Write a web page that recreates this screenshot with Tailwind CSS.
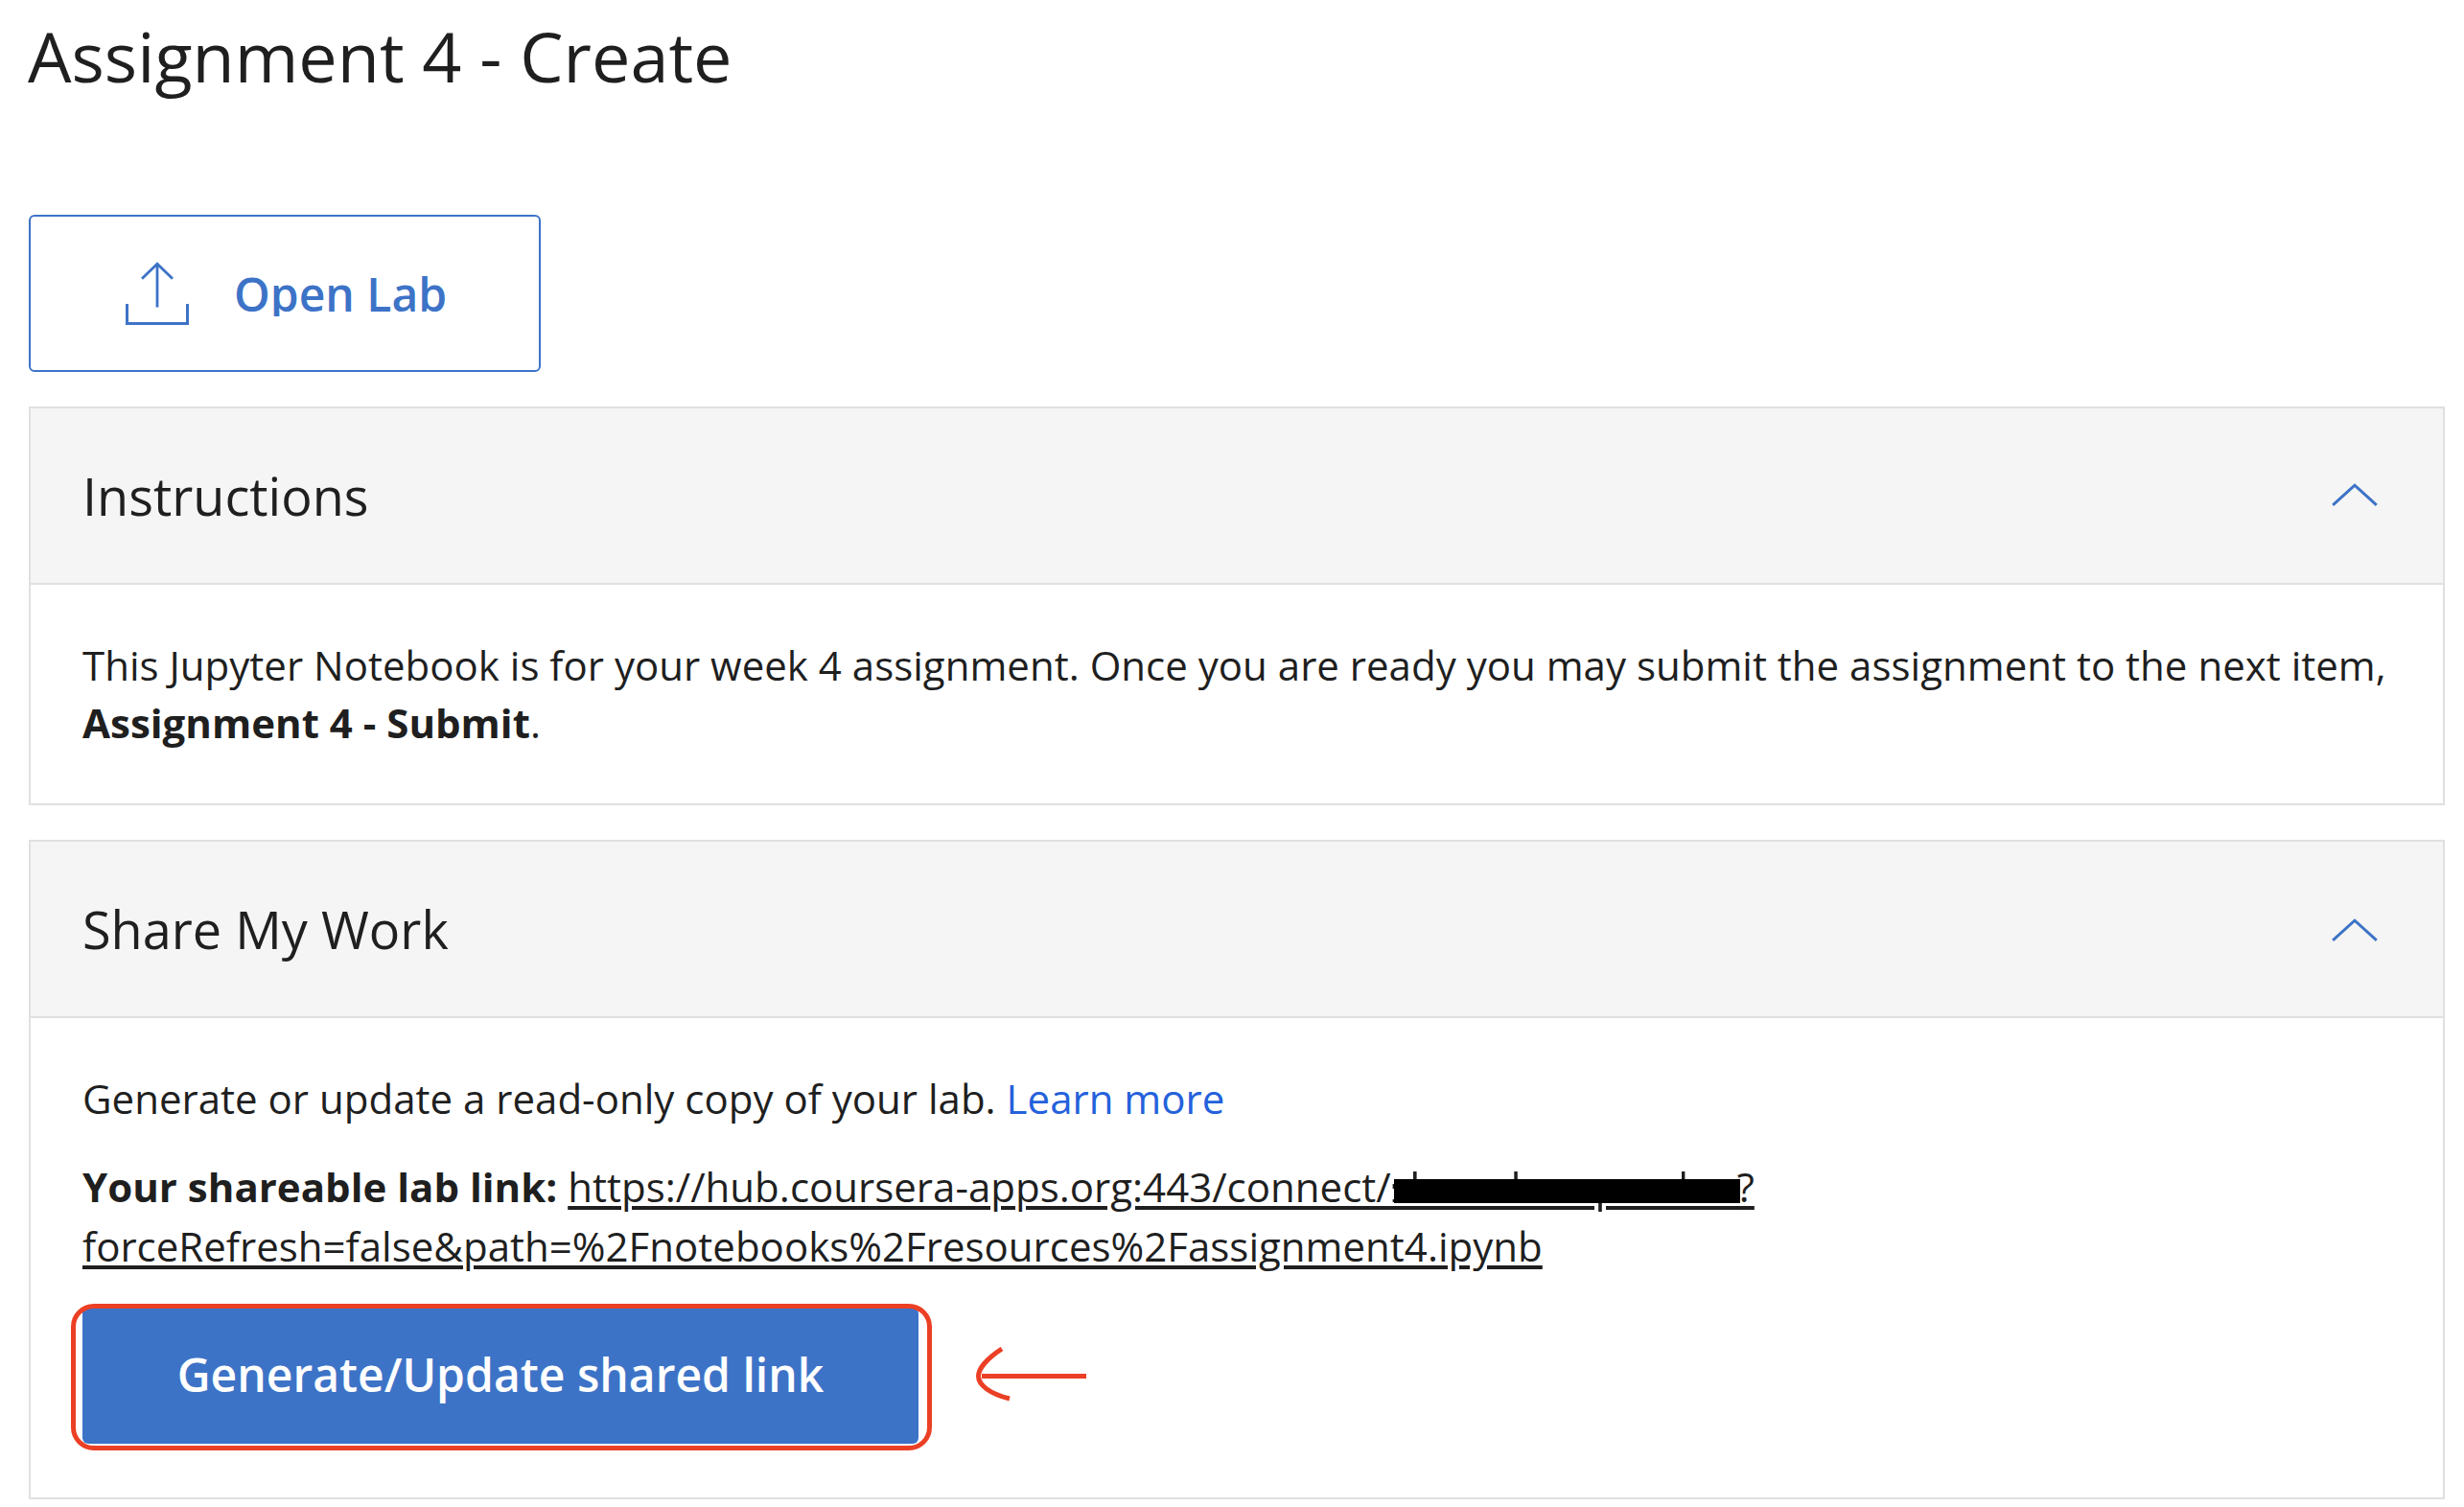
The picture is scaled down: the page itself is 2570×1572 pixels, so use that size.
<!DOCTYPE html>
<html lang="en">
<head>
<meta charset="utf-8">
<title>Assignment 4 - Create</title>
<script src="https://cdn.jsdelivr.net/npm/@tailwindcss/browser@4"></script>
</head>
<body class="bg-white font-['Open_Sans',sans-serif] text-[42px] leading-[60px] tracking-[0.014px] text-[#1f1f1f]">
<main class="flex flex-col items-start pt-4 pl-[30px] pr-5">
  <h1 class="-ml-px text-[72px] leading-[84px]">Assignment 4 - Create</h1>

  <button class="mt-[124px] flex h-[164px] w-[534px] items-center rounded-[6px] border-2 border-[#3d73c7] pl-[98px] text-[#3d73c7]">
    <svg class="h-[68px] w-[68px]" viewBox="0 0 68 68" fill="none" stroke="currentColor" stroke-width="3">
      <path d="M2.5 45V65.4H65.5V45"/>
      <path d="M34 48.5V4M18 18.8L34 3.2L50 18.8" stroke-width="2.8"/>
    </svg>
    <span class="ml-[46px] h-12 overflow-hidden text-[48px] leading-[50px] font-semibold whitespace-nowrap">Open Lab</span>
  </button>

  <section class="mt-9 w-full border-2 border-[#e0e0e0]">
    <header class="flex h-[184px] items-center justify-between border-b-2 border-[#e0e0e0] bg-[#f5f5f5] pr-[68px] pl-[54px]">
      <h2 class="text-[54px] leading-[72px]">Instructions</h2>
      <svg class="mb-[3px] h-6 w-12" viewBox="0 0 48 24" fill="none" stroke="#3d73c7" stroke-width="3"><path d="M1.2 22.8L24 2.2L46.8 22.8"/></svg>
    </header>
    <div class="py-[54px] pl-[54px]">
      <p class="whitespace-nowrap">This Jupyter Notebook is for your week 4 assignment. Once you are ready you may submit the assignment to the next item,<br><strong class="font-bold">Assignment 4 - Submit</strong>.</p>
    </div>
  </section>

  <section class="mt-9 w-full border-2 border-[#e0e0e0]">
    <header class="flex h-[184px] items-center justify-between border-b-2 border-[#e0e0e0] bg-[#f5f5f5] pr-[68px] pl-[54px]">
      <h2 class="text-[54px] leading-[72px]">Share My Work</h2>
      <svg class="mt-0.5 h-6 w-12" viewBox="0 0 48 24" fill="none" stroke="#3d73c7" stroke-width="3"><path d="M1.2 22.8L24 2.2L46.8 22.8"/></svg>
    </header>
    <div class="pt-[54px] pb-14 pl-[54px]">
      <p>Generate or update a read-only copy of your lab. <a class="text-[#2461db]">Learn more</a></p>
      <p class="mt-[31px] leading-[62px] whitespace-nowrap"><strong class="font-bold">Your shareable lab link: </strong><a class="underline decoration-4 underline-offset-4">https://hub.coursera-apps.org:443/connect/</a><svg class="-ml-px inline-block h-[42px] w-[362px] overflow-visible align-[-10px]" viewBox="0 0 362 42" fill="#1f1f1f">
          <!-- redacted part of the address -->
          <path d="M0 36H213V40H0ZM225 36H362V40H225ZM24 0H27.6V10H24ZM129.3 0H132.8V10H129.3ZM304 0H307.4V10H304ZM217.2 32H220.8V42H217.2ZM2.6 13H5V18H2.6ZM2.6 29H5V32H2.6Z"/>
          <path fill="#000" d="M4 8H365V33H4Z"/>
        </svg><a class="underline decoration-4 underline-offset-4">?</a><br><a class="underline decoration-4 underline-offset-4">forceRefresh=false&amp;path=%2Fnotebooks%2Fresources%2Fassignment4.ipynb</a></p>
      <div class="mt-[33px] flex items-center">
        <div class="relative">
          <button class="flex h-[142px] w-[872px] items-center justify-center rounded-[6px] bg-[#3d73c7] pb-[2px] text-[48px] leading-[60px] font-semibold text-white">Generate/Update shared link</button>
          <span class="absolute -top-1 -left-3 h-[153px] w-[898px] rounded-[24px] border-5 border-[#eb4025]"></span>
        </div>
        <svg class="ml-[58px] h-[60px] w-[120px]" viewBox="1016 1405 120 60" fill="none" stroke="#eb4025" stroke-width="5">
          <path d="M1024 1435.5H1133M1045 1407C1029 1417.500 1020.500 1428 1020.500 1435.500C1020.500 1445 1033 1454 1053 1459"/>
        </svg>
      </div>
    </div>
  </section>
</main>
</body>
</html>
